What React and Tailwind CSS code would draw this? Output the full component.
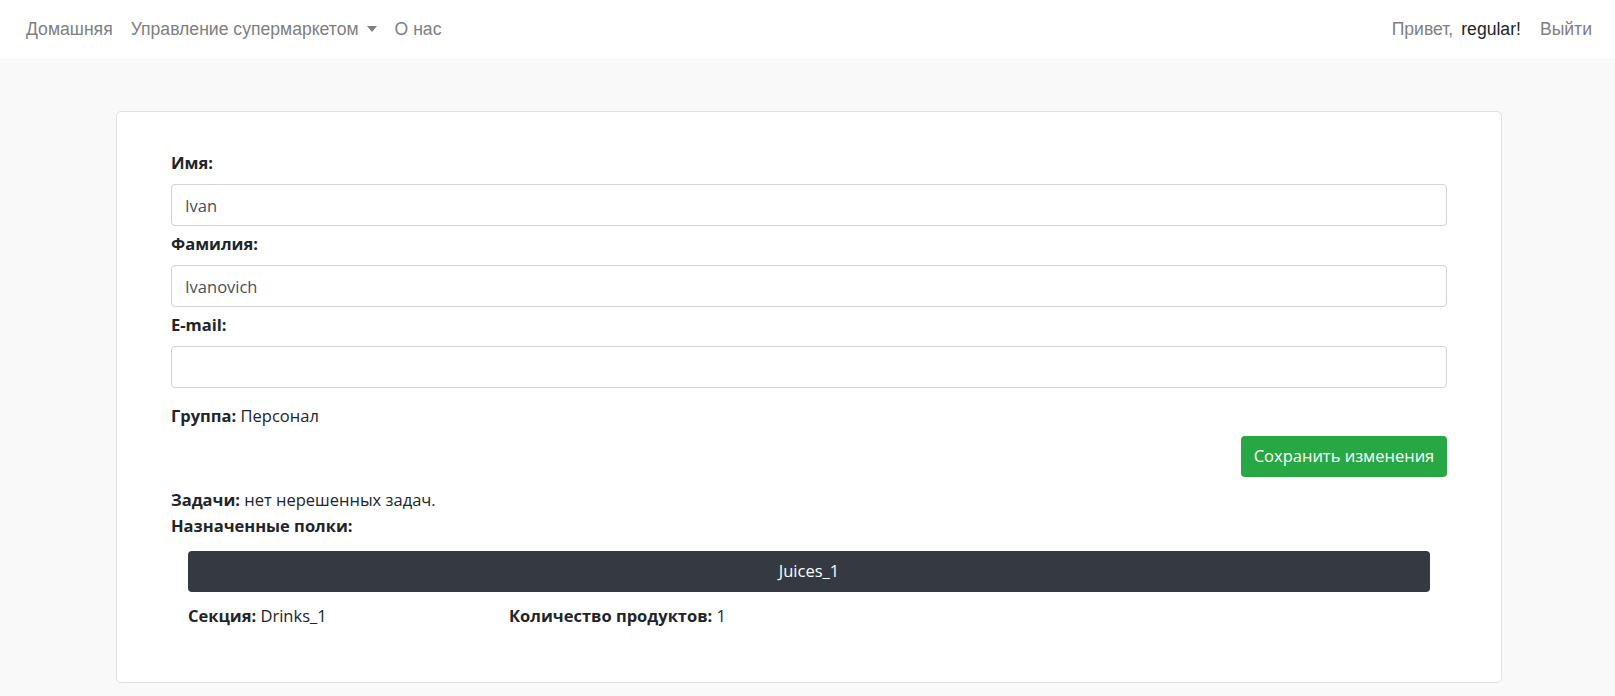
import React, { useState } from 'react';

const NAV_FONT = { fontFamily: '"Liberation Sans", Arial, sans-serif' };

const Field = ({ label, value, onChange }) => (
  <div className="mb-[5px]">
    <label className="block h-[26px] leading-[26px] font-bold mb-[8px]">{label}</label>
    <input
      className="block w-full h-[42px] px-[13px] border border-[#ced4da] rounded-[4px] text-[#495057] bg-white outline-none"
      type="text"
      value={value}
      onChange={onChange}
    />
  </div>
);

const App = () => {
  const [form, setForm] = useState({ name: 'Ivan', surname: 'Ivanovich', email: '' });

  const handleChange = (key) => (e) => setForm({ ...form, [key]: e.target.value });

  return (
    <div className="min-h-[696px] bg-[#f9f9f9]">
      {/* Navbar */}
      <nav
        className="h-[58px] bg-white flex items-center justify-between pl-[26px] pr-[23px] text-[17.6px] text-[#808080]"
        style={NAV_FONT}
      >
        <div className="flex items-center gap-[18px]">
          <span>Домашняя</span>
          <span className="flex items-center">
            Управление супермаркетом
            <span className="ml-[8px] inline-block w-0 h-0 border-l-[5px] border-r-[5px] border-t-[6px] border-l-transparent border-r-transparent border-t-[#808080]"></span>
          </span>
          <span>О нас</span>
        </div>
        <div className="flex items-center">
          <span>Привет,</span>
          <span className="ml-[8px] text-[#212529]">regular!</span>
          <span className="ml-[19px]">Выйти</span>
        </div>
      </nav>

      {/* Profile card */}
      <div className="pt-[53px] pb-[12px]">
        <div
          className="ml-[116px] w-[1386px] bg-white border border-[#dee2e6] rounded-[5px] pt-[38px] pb-[53px] px-[54px] text-[16.5px] text-[#212529]"
          style={{ fontFamily: '"Open Sans", "Noto Sans", sans-serif' }}
        >
          <Field label="Имя:" value={form.name} onChange={handleChange('name')} />
          <Field label="Фамилия:" value={form.surname} onChange={handleChange('surname')} />
          <Field label="E-mail:" value={form.email} onChange={handleChange('email')} />

          <p className="leading-[26px] mt-[15px]">
            <b>Группа:</b> Персонал
          </p>
          <div className="flex justify-end mt-[7px]">
            <button className="h-[41px] w-[206px] bg-[#28a745] text-white rounded-[4px]">
              Сохранить изменения
            </button>
          </div>
          <p className="leading-[26px] mt-[10px]">
            <b>Задачи:</b> нет нерешенных задач.
          </p>
          <p className="leading-[26px] font-bold">Назначенные полки:</p>

          <div className="mx-[17px] mt-[12px]">
            <div className="h-[41px] bg-[#343a40] text-white rounded-[4px] flex items-center justify-center">
              Juices_1
            </div>
            <div className="grid grid-cols-[321px_1fr] leading-[26px] mt-[11px]">
              <p>
                <b>Секция:</b> Drinks_1
              </p>
              <p>
                <b>Количество продуктов:</b> 1
              </p>
            </div>
          </div>
        </div>
      </div>
    </div>
  );
};

export default App;
